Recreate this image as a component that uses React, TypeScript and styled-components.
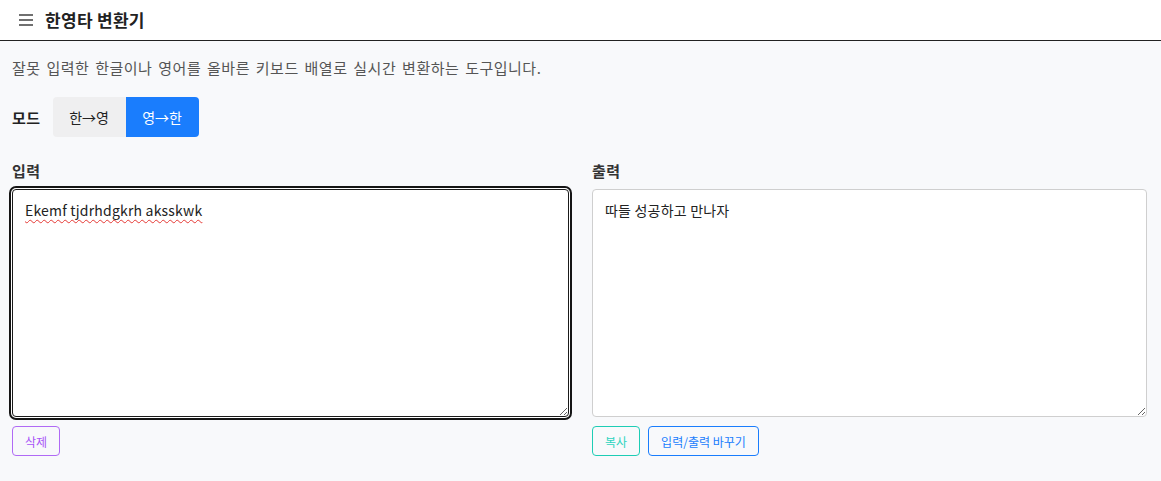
import React from "react";
import styled, { createGlobalStyle } from "styled-components";

const Global = createGlobalStyle`
  html, body { margin: 0; padding: 0; background: #f8f9fb; }
  body { font-family: "Noto Sans CJK KR", "Noto Sans", sans-serif; color: #222; }
  * { box-sizing: border-box; }
`;

const Header = styled.header`
  height: 41px;
  background: #fff;
  border-bottom: 1px solid #222;
  display: flex;
  align-items: center;
  gap: 11px;
  padding: 0 0 1px 18px;
`;

const Title = styled.h1`
  margin: 0;
  font-size: 17px;
  font-weight: 700;
  color: #222;
  line-height: 22px;
  letter-spacing: 0.3px;
`;

const Main = styled.main`
  padding: 16px 14px 24px 12px;
`;

const Desc = styled.p`
  margin: 0;
  font-size: 15px;
  line-height: 22px;
  color: #555;
  letter-spacing: 0.5px;
  word-spacing: 2px;
`;

const ModeRow = styled.div`
  display: flex;
  align-items: center;
  gap: 12px;
  margin-top: 18px;
`;

const ModeLabel = styled.span`
  font-size: 15px;
  font-weight: 700;
  color: #222;
  letter-spacing: 0.5px;
`;

const Toggle = styled.div`
  display: flex;
  border-radius: 4px;
  overflow: hidden;
`;

const ToggleBtn = styled.button<{ $active?: boolean }>`
  width: 73px;
  height: 40px;
  border: none;
  font-family: inherit;
  font-size: 14px;
  background: ${(p) => (p.$active ? "#1a7dfd" : "#efeff0")};
  color: ${(p) => (p.$active ? "#fff" : "#222")};
  padding: 0;
`;

const Columns = styled.div`
  display: grid;
  grid-template-columns: 557px 1fr;
  gap: 23px;
  margin-top: 24px;
`;

const Col = styled.div`
  display: flex;
  flex-direction: column;
`;

const Label = styled.label`
  font-size: 15px;
  font-weight: 700;
  line-height: 20px;
  color: #333;
  margin-bottom: 8px;
  letter-spacing: 0.4px;
`;

const Area = styled.textarea<{ $focused?: boolean }>`
  display: block;
  width: 100%;
  height: 228px;
  resize: vertical;
  padding: 10px 12px;
  font-family: "Noto Sans CJK KR", "Noto Sans", sans-serif;
  font-size: 14px;
  line-height: 20px;
  letter-spacing: 0.2px;
  color: #222;
  background: #fff;
  border-radius: 4px;
  border: 1px solid ${(p) => (p.$focused ? "#1a1a1a" : "#cfcfcf")};
  box-shadow: ${(p) => (p.$focused ? "0 0 0 1px #fff, 0 0 0 3px #151515" : "none")};
  outline: none;
  text-decoration: ${(p) => (p.$focused ? "underline wavy #e53935" : "none")};
  text-decoration-thickness: 1px;
  text-underline-offset: 3px;
`;

const Actions = styled.div`
  display: flex;
  gap: 8px;
  margin-top: 9px;
`;

const OutlineBtn = styled.button<{ $color: string; $text: string }>`
  height: 30px;
  padding: 0 12px;
  background: transparent;
  border: 1px solid ${(p) => p.$color};
  color: ${(p) => p.$text};
  border-radius: 4px;
  font-family: inherit;
  font-size: 12px;
`;

const MenuIcon = () => (
  <svg width="16" height="14" viewBox="0 0 16 14" fill="none" stroke="#333" strokeWidth="1.4">
    <line x1="1" y1="2" x2="15" y2="2" />
    <line x1="1" y1="7" x2="15" y2="7" />
    <line x1="1" y1="12" x2="15" y2="12" />
  </svg>
);

export default function App() {
  return (
    <>
      <Global />
      <Header>
        <MenuIcon />
        <Title>한영타 변환기</Title>
      </Header>
      <Main>
        <Desc>잘못 입력한 한글이나 영어를 올바른 키보드 배열로 실시간 변환하는 도구입니다.</Desc>
        <ModeRow>
          <ModeLabel>모드</ModeLabel>
          <Toggle>
            <ToggleBtn>한→영</ToggleBtn>
            <ToggleBtn $active>영→한</ToggleBtn>
          </Toggle>
        </ModeRow>
        <Columns>
          <Col>
            <Label>입력</Label>
            <Area $focused spellCheck={false} defaultValue="Ekemf tjdrhdgkrh aksskwk" />
            <Actions>
              <OutlineBtn $color="#b06af5" $text="#a855f7">삭제</OutlineBtn>
            </Actions>
          </Col>
          <Col>
            <Label>출력</Label>
            <Area readOnly spellCheck={false} defaultValue="따들 성공하고 만나자" />
            <Actions>
              <OutlineBtn $color="#1ecdb5" $text="#2dd4bf">복사</OutlineBtn>
              <OutlineBtn $color="#1a7dfd" $text="#1a7dfd">입력/출력 바꾸기</OutlineBtn>
            </Actions>
          </Col>
        </Columns>
      </Main>
    </>
  );
}
